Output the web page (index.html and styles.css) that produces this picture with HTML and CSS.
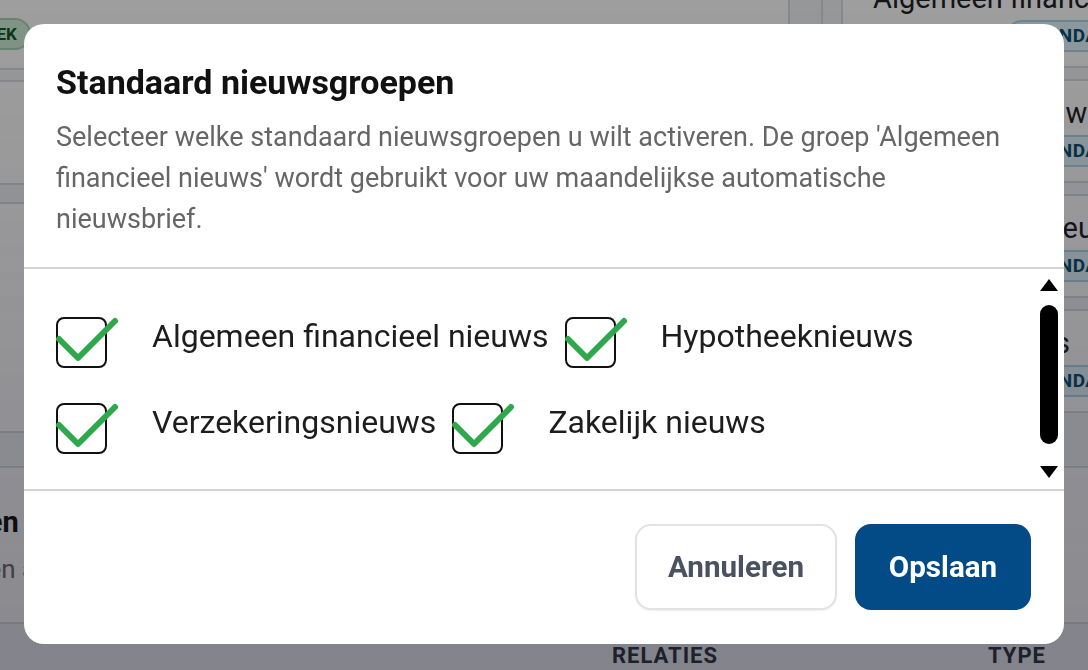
FILE: index.html
```html
<!DOCTYPE html>
<html lang="nl">
<head>
<meta charset="utf-8">
<title>Standaard nieuwsgroepen</title>
<link rel="stylesheet" href="styles.css">
</head>
<body>
<div class="page">
  <div class="top-area">
    <div class="left-col">
      <div class="bg-card card-a"><span class="badge-green">WEEK</span></div>
      <div class="bg-card card-b"></div>
      <div class="bg-card card-c"></div>
    </div>
    <div class="spacer-col"></div>
    <div class="right-col">
      <div class="group-card">
        <div class="group-title">Algemeen financieel nieuws</div>
        <span class="badge-std">STANDAARD</span>
      </div>
      <div class="group-card">
        <div class="group-title">Hypotheeknieuws</div>
        <span class="badge-std">STANDAARD</span>
      </div>
      <div class="group-card">
        <div class="group-title">Verzekeringsnieuws</div>
        <span class="badge-std">STANDAARD</span>
      </div>
      <div class="group-card">
        <div class="group-title">Zakelijk nieuws</div>
        <span class="badge-std">STANDAARD</span>
      </div>
    </div>
  </div>
  <div class="section">
    <div class="section-head">
      <h2 class="section-title">Alle groepen</h2>
      <p class="section-sub">Beheer groepen aan de hand van relaties</p>
    </div>
    <div class="table-head">
      <span>NAAM</span>
      <span>RELATIES</span>
      <span>TYPE</span>
    </div>
  </div>
</div>

<div class="overlay"></div>

<div class="modal-wrap">
  <div class="modal">
    <div class="modal-head">
      <h1 class="modal-title">Standaard nieuwsgroepen</h1>
      <p class="modal-desc">Selecteer welke standaard nieuwsgroepen u wilt activeren. De groep 'Algemeen financieel nieuws' wordt gebruikt voor uw maandelijkse automatische nieuwsbrief.</p>
    </div>
    <div class="modal-body">
      <div class="options">
        <label class="option">
          <span class="box"><svg class="check" width="64" height="52" viewBox="0 0 64 52"><path d="M3 22 L22 41 L59 4"/></svg></span>
          <span class="opt-label">Algemeen financieel nieuws</span>
        </label>
        <label class="option">
          <span class="box"><svg class="check" width="64" height="52" viewBox="0 0 64 52"><path d="M3 22 L22 41 L59 4"/></svg></span>
          <span class="opt-label">Hypotheeknieuws</span>
        </label>
        <label class="option">
          <span class="box"><svg class="check" width="64" height="52" viewBox="0 0 64 52"><path d="M3 22 L22 41 L59 4"/></svg></span>
          <span class="opt-label">Verzekeringsnieuws</span>
        </label>
        <label class="option">
          <span class="box"><svg class="check" width="64" height="52" viewBox="0 0 64 52"><path d="M3 22 L22 41 L59 4"/></svg></span>
          <span class="opt-label">Zakelijk nieuws</span>
        </label>
      </div>
      <div class="scrollbar">
        <span class="arrow-up"></span>
        <span class="thumb"></span>
        <span class="arrow-down"></span>
      </div>
    </div>
    <div class="modal-foot">
      <button class="btn btn-cancel">Annuleren</button>
      <button class="btn btn-save">Opslaan</button>
    </div>
  </div>
</div>
</body>
</html>
```

FILE: styles.css
```css
html, body {
  margin: 0;
  padding: 0;
}
body {
  width: 1088px;
  height: 670px;
  overflow: hidden;
  font-family: Roboto, "Noto Sans", "Liberation Sans", sans-serif;
  background: #eef0f3;
}

/* ---------- background page ---------- */
.page {
  margin-left: -200px;
  margin-top: -36px;
  width: 1400px;
}
.top-area {
  display: grid;
  grid-template-columns: 990px 33px 1fr;
  height: 504px;
  border-bottom: 2px solid #d6d8dc;
  box-sizing: border-box;
}
.left-col {
  display: flex;
  flex-direction: column;
  gap: 10px;
  border-right: 2px solid #d6d8dc;
}
.bg-card {
  background: #fafafa;
  border-bottom: 2px solid #d6d8dc;
  border-top: 2px solid #d6d8dc;
  box-sizing: border-box;
}
.card-a {
  height: 106px;
  display: flex;
  align-items: flex-end;
  padding: 0 0 18px 158px;
  border-top: none;
}
.badge-green {
  font-size: 17px;
  font-weight: 700;
  color: #0f5a25;
  background: #cdebd4;
  border: 2px solid #a3d2ae;
  border-radius: 16px;
  padding: 3px 12px;
  line-height: 22px;
}
.card-b { height: 105px; }
.card-c { height: 231px; margin-top: 7px; }
.spacer-col {
  border-right: 2px solid #d6d8dc;
}
.right-col {
  margin-left: 18px;
  display: flex;
  flex-direction: column;
  gap: 11px;
  overflow: hidden;
}
.group-card {
  background: #fbfbfb;
  border: 2px solid #d6d8dc;
  border-right: none;
  padding: 16px 0 18px 30px;
  height: 104px;
  box-sizing: border-box;
  white-space: nowrap;
}
.group-title {
  font-size: 29px;
  line-height: 32px;
  color: #1f2227;
  margin-bottom: 6px;
}
.badge-std {
  display: inline-block;
  margin-left: 133px;
  font-size: 19px;
  font-weight: 700;
  letter-spacing: 0.5px;
  color: #0b4f6c;
  background: #dff1fa;
  border: 2px solid #a9d3e6;
  border-radius: 16px;
  padding: 2px 14px;
  line-height: 24px;
}
.section {
  background: #f7f7f8;
}
.section-head {
  padding: 37px 0 38px 34px;
  border-bottom: 2px solid #d6d8dc;
}
.section-title {
  margin: 0 0 0 20px;
  font-size: 29px;
  line-height: 34px;
  font-weight: 700;
  color: #111;
}
.section-sub {
  margin: 15px 0 0;
  font-size: 26px;
  line-height: 30px;
  color: #6b6b6b;
}
.table-head {
  display: grid;
  grid-template-columns: 778px 376px auto;
  padding: 19px 0 20px 34px;
  font-size: 22px;
  line-height: 26px;
  font-weight: 700;
  letter-spacing: 1px;
  color: #2d3340;
  background: #eceef1;
}

.overlay {
  position: fixed;
  inset: 0;
  background: linear-gradient(to bottom, rgba(0, 0, 0, 0.37), rgba(12, 12, 24, 0.47));
}

/* ---------- modal ---------- */
.modal-wrap {
  position: fixed;
  inset: 0;
  padding: 24px;
  display: flex;
}
.modal {
  width: 1040px;
  height: 620px;
  background: #fff;
  border-radius: 20px;
  display: flex;
  flex-direction: column;
  overflow: hidden;
}
.modal-head {
  padding: 38px 32px 27px;
  border-bottom: 2px solid #d4d4d4;
}
.modal-title {
  margin: 0;
  font-size: 34px;
  line-height: 40px;
  font-weight: 700;
  color: #111;
}
.modal-desc {
  margin: 15px 0 0;
  font-size: 27px;
  line-height: 41px;
  color: #666;
}
.modal-body {
  height: 220px;
  display: flex;
  border-bottom: 2px solid #d4d4d4;
}
.options {
  flex: 1;
  padding: 48px 0 0 32px;
  display: flex;
  flex-wrap: wrap;
  align-content: flex-start;
  row-gap: 35px;
  column-gap: 16px;
}
.option {
  display: flex;
  align-items: flex-start;
  gap: 45px;
  cursor: pointer;
}
.box {
  position: relative;
  width: 51px;
  height: 51px;
  box-sizing: border-box;
  border: 2px solid #111;
  border-radius: 8px;
  flex: none;
}
.check {
  position: absolute;
  left: -2px;
  top: -2px;
  overflow: visible;
}
.check path {
  fill: none;
  stroke: #2fa84c;
  stroke-width: 6;
  stroke-linecap: round;
  stroke-linejoin: round;
}
.opt-label {
  font-size: 32px;
  line-height: 38px;
  color: #1d1d1d;
  white-space: nowrap;
}
.scrollbar {
  width: 18px;
  margin-right: 6px;
  padding-top: 10px;
  display: flex;
  flex-direction: column;
  align-items: center;
}
.arrow-up {
  width: 0;
  height: 0;
  border-left: 9px solid transparent;
  border-right: 9px solid transparent;
  border-bottom: 12px solid #000;
}
.arrow-down {
  width: 0;
  height: 0;
  margin-top: 22px;
  border-left: 9px solid transparent;
  border-right: 9px solid transparent;
  border-top: 12px solid #000;
}
.thumb {
  width: 18px;
  height: 139px;
  margin-top: 14px;
  background: #000;
  border-radius: 9px;
}
.modal-foot {
  flex: 1;
  display: flex;
  justify-content: flex-end;
  align-items: flex-start;
  gap: 18px;
  padding: 33px 33px 0;
}
.btn {
  height: 86px;
  border-radius: 16px;
  font-family: Roboto, "Noto Sans", sans-serif;
  font-size: 29.6px;
  font-weight: 700;
  cursor: pointer;
  box-sizing: border-box;
}
.btn-cancel {
  width: 202px;
  background: #fff;
  color: #4a5160;
  border: 2px solid #e2e2e2;
  box-shadow: 0 1px 2px rgba(0, 0, 0, 0.06);
}
.btn-save {
  width: 176px;
  background: #034b86;
  color: #fff;
  border: none;
}
```
